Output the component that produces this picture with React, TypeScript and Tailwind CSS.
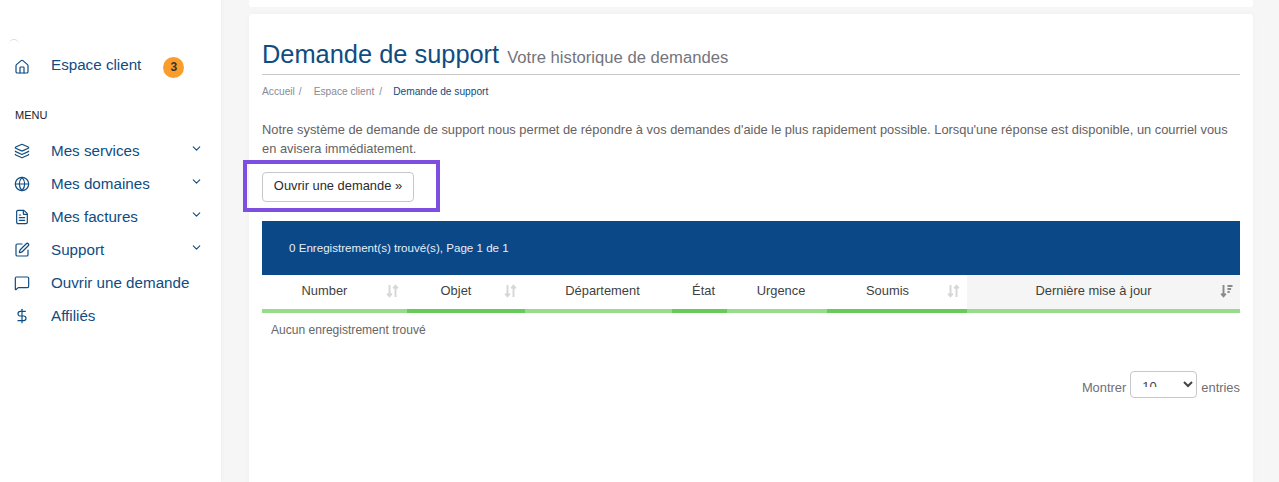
import { ChevronDown, DollarSign, FileText, Globe, House, Layers, MessageSquare, SquarePen, type LucideIcon } from "lucide-react";

type NavItem = { label: string; icon: LucideIcon; chevron?: boolean };

const MENU: NavItem[] = [
  { label: "Mes services", icon: Layers, chevron: true },
  { label: "Mes domaines", icon: Globe, chevron: true },
  { label: "Mes factures", icon: FileText, chevron: true },
  { label: "Support", icon: SquarePen, chevron: true },
  { label: "Ouvrir une demande", icon: MessageSquare },
  { label: "Affiliés", icon: DollarSign },
];

const COLUMNS = [
  { label: "Number", width: "w-[145px]", sort: true, dark: false, pad: "pr-[20px]", sortPos: "right-[8px]" },
  { label: "Objet", width: "w-[118px]", sort: true, dark: true, pad: "pr-[20px]", sortPos: "right-[8px]" },
  { label: "Département", width: "w-[147px]", sort: false, dark: false, pad: "pl-[8px]", sortPos: "" },
  { label: "État", width: "w-[55px]", sort: false, dark: true, pad: "pl-[8px]", sortPos: "" },
  { label: "Urgence", width: "w-[100px]", sort: false, dark: false, pad: "pl-[8px]", sortPos: "" },
  { label: "Soumis", width: "w-[140px]", sort: true, dark: true, pad: "pr-[19px]", sortPos: "right-[7px]" },
];

function SortIcon({ active }: { active?: boolean }) {
  return (
    <svg width="13" height="14" viewBox="0 0 13 14" fill="none" strokeWidth="1.9" className={active ? "text-[#8a8a8a]" : "text-[#d6d6d6]"} stroke="currentColor">
      <path d="M3.5 1v11M1.2 9.6l2.3 2.6 2.3-2.6" />
      {active ? <path d="M7.5 2h5M7.5 5h3.6M7.5 8h2.2" /> : <path d="M9.5 13V2M7.2 4.4l2.3-2.6 2.3 2.6" />}
    </svg>
  );
}

export default function App() {
  return (
    <div className="flex h-[482px] overflow-hidden bg-[#f6f6f6] font-['Liberation_Sans',Arial,sans-serif]">
      {/* Sidebar */}
      <aside className="relative w-[221px] shrink-0 bg-white pt-[55px] text-[#0f4c81] shadow-[1px_0_3px_rgba(0,0,0,0.03)]">
        <span className="absolute left-[9px] top-[39px] h-[6px] w-[10px] rounded-t-full border-t border-[#dddddd]" />
        <div className="flex h-[24px] items-center pl-[14px]">
          <House size={16} strokeWidth={1.8} className="mr-[21px]" />
          <span className="-translate-y-[2px] text-[15.2px] leading-[20px]">Espace client</span>
          <span className="ml-[22px] grid h-[21px] w-[21px] place-items-center rounded-full bg-[#fb9d2c] text-[12px] font-bold text-[#333333]">3</span>
        </div>
        <div className="mt-[29px] pl-[15px] text-[11px] leading-[14px] text-[#222222]">MENU</div>
        <nav className="mt-[12px]">
          {MENU.map((item) => {
            const Icon = item.icon;
            return (
              <div key={item.label} className="flex h-[33px] items-center pl-[14px] pr-[18px]">
                <Icon size={16} strokeWidth={1.8} className="mr-[21px] shrink-0" />
                <span className="flex-1 text-[15.2px] leading-[20px]">{item.label}</span>
                {item.chevron && <ChevronDown size={13} strokeWidth={2} className="-translate-y-[2px]" />}
              </div>
            );
          })}
        </nav>
      </aside>

      {/* Main */}
      <main className="min-w-0 flex-1 pl-[28px] pr-[26px]">
        <div className="h-[7px] rounded-b-[3px] bg-white" />
        <section className="relative mt-[7px] h-[500px] rounded-t-[3px] bg-white px-[13px] pt-[25px] shadow-[0_0_6px_rgba(0,0,0,0.03)]">
          <h1 className="flex h-[36px] items-baseline gap-[8px] border-b border-[#c9c9c9] leading-[30px] text-[#0f4c81]">
            <span className="text-[25.4px]">Demande de support</span>
            <span className="text-[16.65px] text-[#74747c]">Votre historique de demandes</span>
          </h1>

          <div className="mt-[10px] flex text-[10.2px] leading-[14px] text-[#8a8a92]">
            <span>Accueil</span>
            <span className="ml-[4px] mr-[12px]">/</span>
            <span>Espace client</span>
            <span className="ml-[5px] mr-[11px]">/</span>
            <span className="text-[#0f4c81]">Demande de support</span>
          </div>

          <p className="mt-[21px] w-[978px] text-[12.87px] leading-[19px] text-[#65625f]">
            Notre système de demande de support nous permet de répondre à vos demandes d'aide le plus rapidement possible. Lorsqu'une réponse est disponible, un courriel vous en avisera immédiatement.
          </p>

          <div className="relative mt-[14px] w-fit">
            <button className="block h-[30px] w-[152px] rounded-[4px] border border-[#c8c8c8] bg-white pb-[2px] text-[12.9px] text-[#2b2b2b]">
              Ouvrir une demande »
            </button>
            {/* Highlight frame drawn on the capture */}
            <span className="absolute -left-[19px] -top-[12px] h-[52px] w-[197px] border-[4px] border-[#7d4fe0]" />
          </div>

          <div className="mt-[19px] flex h-[54px] items-center bg-[#0b4888] pl-[27px] text-[11.6px] text-[#e6eef6]">
            0 Enregistrement(s) trouvé(s), Page 1 de 1
          </div>

          <div className="flex text-[12.9px] text-[#3f3f3f]">
            {COLUMNS.map((col) => (
              <div key={col.label} className={`relative flex h-[38px] items-center justify-center border-b-[4px] pb-[3px] ${col.width} ${col.dark ? "border-[#66cb59]" : "border-[#97dc8b]"} ${col.pad}`}>
                {col.label}
                {col.sort && (
                  <span className={`absolute top-[9px] ${col.sortPos}`}>
                    <SortIcon />
                  </span>
                )}
              </div>
            ))}
            <div className="relative flex h-[38px] flex-1 items-center justify-center border-b-[4px] border-[#97dc8b] bg-[#f5f5f5] pb-[3px] pr-[20px]">
              Dernière mise à jour
              <span className="absolute right-[7px] top-[9px]">
                <SortIcon active />
              </span>
            </div>
          </div>

          <div className="mt-[10px] pl-[9px] text-[12.05px] leading-[14px] text-[#666666]">Aucun enregistrement trouvé</div>

          <div className="mt-[34px] flex items-center justify-end gap-[4px] text-[12.9px] text-[#6f6f75]">
            <span className="translate-y-[3px]">Montrer</span>
            <select className="h-[27px] w-[67px] rounded-[4px] border border-[#c8c8c8] bg-white pb-[10px] pl-[7px] pt-[6px] text-[13px] leading-[20px] text-[#444444]">
              <option>10</option>
            </select>
            <span className="translate-y-[3px]">entries</span>
          </div>

          <span className="absolute bottom-[14px] right-[4px] h-[8px] w-[36px] rounded-full bg-[#cfc4fb] opacity-60 blur-[4px]" />
        </section>
      </main>
    </div>
  );
}
